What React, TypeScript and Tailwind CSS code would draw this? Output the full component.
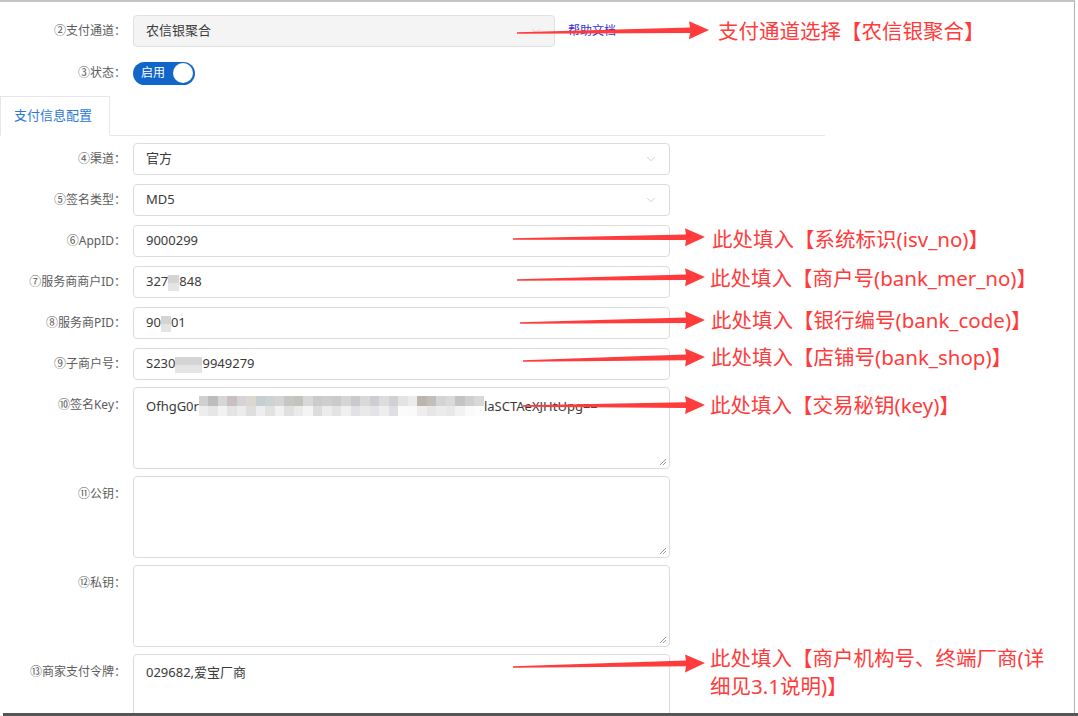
import React from 'react'
import { ChevronDown } from 'lucide-react'

const font = "font-['Noto_Sans','Noto_Sans_CJK_SC',sans-serif]"

// tapered annotation arrow, tail (x0,y0) -> tip (xt,yt)
function arrowPoints(x0: number, y0: number, xt: number, yt: number) {
  const xh = xt - 19
  const yh = y0 + ((yt - y0) * (xh - x0)) / (xt - x0)
  return `${x0},${y0 - 0.7} ${xh},${yh - 2.8} ${xh - 1},${yh - 9} ${xt},${yt} ${xh - 1},${yh + 9} ${xh},${yh + 2.8} ${x0},${y0 + 0.7}`
}

const arrows = [
  [517, 33, 709, 30],
  [513, 239, 705, 237],
  [517, 280, 705, 277],
  [520, 323, 705, 320],
  [523, 361, 705, 357],
  [523, 406, 705, 405],
  [513, 667, 705, 663],
]

const keyTop = [
  'bg-[#cfcfcf]', 'bg-[#bdbdbd]', 'bg-[#d6d6d6]', 'bg-[#c9bfc0]', 'bg-[#d3d3d8]', 'bg-[#dcd7d1]',
  'bg-[#c5ced3]', 'bg-[#cfd2d2]', 'bg-[#d4d4d4]', 'bg-[#c8c6c0]', 'bg-[#c0c4bf]', 'bg-[#d8d8d8]',
  'bg-[#cbcbcb]', 'bg-[#d0cdd0]', 'bg-[#c6cccc]', 'bg-[#d5d5d5]', 'bg-[#c9c9cf]', 'bg-[#d9d9d9]',
  'bg-[#cdcdd4]', 'bg-[#dcdcdc]', 'bg-[#d3d0d4]', 'bg-[#e3e3e0]', 'bg-[#ececec]', 'bg-[#bcb5ae]',
  'bg-[#c2bdb8]', 'bg-[#d4d4d4]', 'bg-[#dadada]', 'bg-[#c4c4c4]', 'bg-[#cfcfcf]', 'bg-[#d8d8d8]',
]
const keyBottom = [
  'bg-[#ededed]', 'bg-[#e6e6e6]', 'bg-[#f2f2f2]', 'bg-[#e4e4e4]', 'bg-[#ececec]', 'bg-[#dedede]',
  'bg-[#eeeeee]', 'bg-[#e2e2e2]', 'bg-[#f1f1f1]', 'bg-[#e0e0e0]', 'bg-[#eaeaea]', 'bg-[#f4f4f4]',
  'bg-[#dcdcdc]', 'bg-[#ececec]', 'bg-[#e3e3e3]', 'bg-[#f0f0f0]', 'bg-[#e1e1e6]', 'bg-[#e9e9e9]',
  'bg-[#e4e4e8]', 'bg-[#eeeeee]', 'bg-[#dfdfe3]', 'bg-[#fbfbfb]', 'bg-[#fafafa]', 'bg-[#eeeeee]',
  'bg-[#e6e6e6]', 'bg-[#ececec]', 'bg-[#e8e8e8]', 'bg-[#f2f2f2]', 'bg-[#fafafa]', 'bg-[#fcfcfc]',
]

function Mosaic({ w }: { w: string }) {
  return (
    <span className={`inline-flex flex-col align-middle ${w}`}>
      <span className="h-[8px] bg-[#d4d4d4]" />
      <span className="h-[8px] bg-[#e4e4e4]" />
    </span>
  )
}

function Label({ children, top }: { children: React.ReactNode; top?: boolean }) {
  return (
    <div className={`w-[126px] shrink-0 text-right text-[12px] leading-[18px] text-[#5c5c5c] ${top ? 'pt-[9px]' : ''}`}>
      {children}
    </div>
  )
}

function Field({ label, children, select }: { label: string; children?: React.ReactNode; select?: boolean }) {
  return (
    <div className="flex h-[32px] items-center">
      <Label>{label}</Label>
      <div className="ml-[7px] flex h-[32px] w-[537px] items-center justify-between rounded-[4px] border border-[#dcdcdc] bg-white pl-[12px] pr-[11px] text-[13px] text-[#3a3a3a]">
        <span className="whitespace-nowrap">{children}</span>
        {select && <ChevronDown className="h-[14px] w-[14px] text-[#bdbdbd]" strokeWidth={1.2} />}
      </div>
    </div>
  )
}

function Grip() {
  return (
    <svg className="absolute bottom-[2px] right-[2px]" width="9" height="9" viewBox="0 0 9 9">
      <path d="M8 2 L2 8 M8 5 L5 8" stroke="#9a9a9a" strokeWidth="1" />
    </svg>
  )
}

function Area({ label, children }: { label: string; children?: React.ReactNode }) {
  return (
    <div className="mt-[7px] flex">
      <Label top>{label}</Label>
      <div className="relative ml-[7px] h-[82px] w-[537px] shrink-0 rounded-[4px] border border-[#dcdcdc] bg-white px-[12px] pt-[8px] text-[13px] leading-[18px] text-[#3a3a3a]">
        {children}
        <Grip />
      </div>
    </div>
  )
}

const note = 'absolute whitespace-nowrap text-[20.5px] leading-[28px] text-[#ff3b3b]'

export default function App() {
  return (
    <div className={`relative h-[716px] w-[1078px] overflow-hidden bg-white ${font}`}>
      <div className="h-[713px] w-[1075px] overflow-hidden border-r border-t-2 border-r-[#b4b4b4] border-t-[#c4c4c4]">
        {/* 支付通道 */}
        <div className="mt-[13px] flex h-[32px] items-center">
          <Label>②支付通道：</Label>
          <div className="ml-[7px] flex h-[32px] w-[422px] items-center justify-between rounded-[4px] border border-[#e0e0e0] bg-[#f4f4f4] pl-[12px] pr-[11px] text-[13px] text-[#3a3a3a]">
            <span>农信银聚合</span>
            <ChevronDown className="h-[14px] w-[14px] text-[#c4c4c4]" strokeWidth={1.2} />
          </div>
          <a className="ml-[13px] text-[12px] text-[#2f2fe0]">帮助文档</a>
        </div>

        {/* 状态 */}
        <div className="mt-[10px] flex h-[32px] items-center">
          <Label>③状态：</Label>
          <div className="ml-[7px] flex h-[23px] w-[62px] items-center justify-between rounded-full bg-[#1366c9] pl-[8px] pr-[2px]">
            <span className="text-[12px] leading-none text-white">启用</span>
            <span className="h-[20px] w-[20px] rounded-full bg-white" />
          </div>
        </div>

        {/* tabs */}
        <div className="mt-[7px] flex h-[40px] w-[825px] border-b border-[#e6e6e6]">
          <div className="-mb-px flex h-[40px] w-[110px] items-center border border-[#e6e6e6] border-b-white bg-white pl-[13px] text-[13px] text-[#2d78d6]">
            支付信息配置
          </div>
        </div>

        <div className="mt-[7px] flex flex-col gap-[9px]">
          <Field label="④渠道：" select>官方</Field>
          <Field label="⑤签名类型：" select>MD5</Field>
          <Field label="⑥AppID：">9000299</Field>
          <Field label="⑦服务商商户ID：">
            327<Mosaic w="w-[11px]" />848
          </Field>
          <Field label="⑧服务商PID：">
            90<Mosaic w="w-[10px]" />01
          </Field>
          <Field label="⑨子商户号：">
            S230<Mosaic w="w-[27px]" />9949279
          </Field>
        </div>

        <Area label="⑩签名Key：">
          <div className="flex items-center whitespace-nowrap">
            <span>OfhgG0r</span>
            <span className="flex flex-col">
              <span className="flex">
                {keyTop.map((c, i) => (
                  <span key={i} className={`h-[10px] w-[9.5px] ${c}`} />
                ))}
              </span>
              <span className="flex">
                {keyBottom.map((c, i) => (
                  <span key={i} className={`h-[10px] w-[9.5px] ${c}`} />
                ))}
              </span>
            </span>
            <span>laSCTAeXJHtUpg==</span>
          </div>
        </Area>
        <Area label="⑪公钥：" />
        <Area label="⑫私钥：" />
        <Area label="⑬商家支付令牌：">029682,爱宝厂商</Area>
      </div>
      <div className="ml-[3px] h-[3px] bg-[#555555]" />

      {/* annotations */}
      <svg className="pointer-events-none absolute left-0 top-0" width="1078" height="716">
        {arrows.map(([a, b, c, d], i) => (
          <polygon key={i} points={arrowPoints(a, b, c, d)} fill="#ff3b3b" />
        ))}
      </svg>
      <div className={`${note} left-[718px] top-[17px]`}>支付通道选择【农信银聚合】</div>
      <div className={`${note} left-[712px] top-[225px]`}>此处填入【系统标识(isv_no)】</div>
      <div className={`${note} left-[710px] top-[264px]`}>此处填入【商户号(bank_mer_no)】</div>
      <div className={`${note} left-[711px] top-[306px]`}>此处填入【银行编号(bank_code)】</div>
      <div className={`${note} left-[711px] top-[343px]`}>此处填入【店铺号(bank_shop)】</div>
      <div className={`${note} left-[710px] top-[391px]`}>此处填入【交易秘钥(key)】</div>
      <div className={`${note} left-[710px] top-[644px]`}>
        此处填入【商户机构号、终端厂商(详
        <br />
        细见3.1说明)】
      </div>
    </div>
  )
}
